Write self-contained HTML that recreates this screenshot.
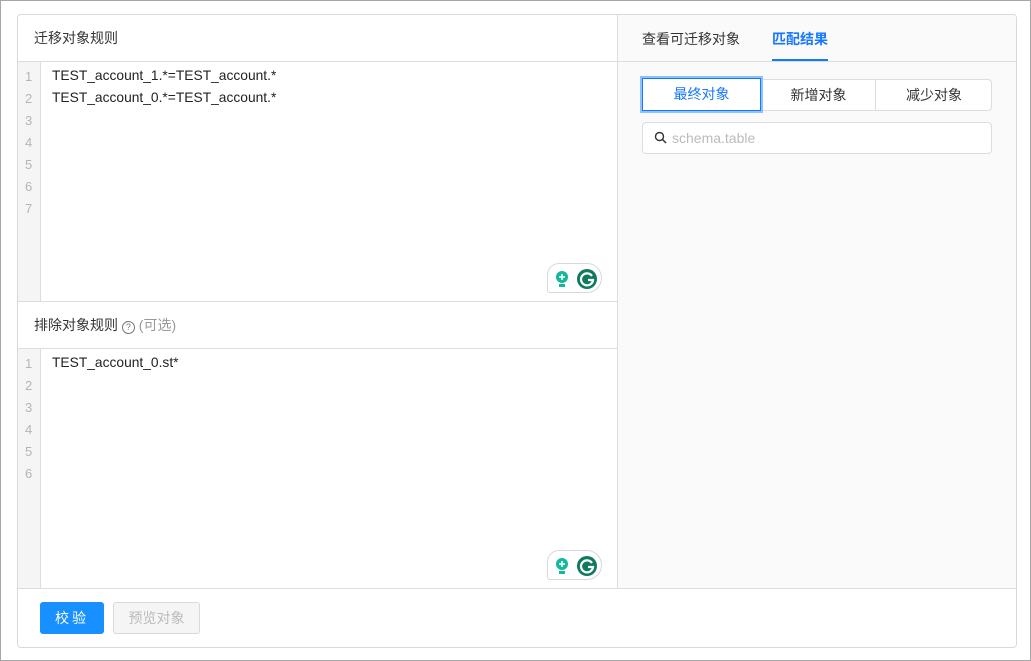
<!DOCTYPE html>
<html><head><meta charset="utf-8"><style>
*{box-sizing:border-box;margin:0;padding:0}
body{width:1031px;height:661px;background:#fff;font-family:"Liberation Sans","Noto Sans CJK SC",sans-serif;font-size:14px;color:#333;position:relative;overflow:hidden}
.outer{position:absolute;left:0;top:0;width:1031px;height:661px;border:1px solid #a6a6a6}
.card{position:absolute;left:17px;top:14px;width:1000px;height:634px;border:1px solid #d9d9d9;border-radius:4px;overflow:hidden}
.abs{position:absolute}
.hdr{position:absolute;left:0;width:599px;height:47px;border-bottom:1px solid #ddd;padding-left:16px;line-height:47px;font-size:14px;color:#333}
.ed{position:absolute;left:0;width:599px;border-bottom:1px solid #ddd}
.gut{position:absolute;left:0;top:0;bottom:0;width:23px;background:#f5f5f5;border-right:1px solid #ddd}
.ln{position:absolute;left:7px;color:#b5b5b5;font-size:13px}
.code{position:absolute;left:34px;font-size:13.8px;color:#222}
.gram{position:absolute;width:55px;height:30px;border:1px solid #d8d8d8;border-radius:12px 15px 15px 3px;background:#fff}
.btn{position:absolute;top:587px;height:32px;border-radius:3px;line-height:32px;text-align:center;font-size:14px}
</style></head><body>
<div class="outer"></div>
<div class="card">
 <div class="abs" style="left:599px;top:0;width:401px;height:574px;background:#fafafa;border-left:1px solid #ddd;border-bottom:1px solid #ddd"></div>
 <div class="hdr" style="top:0">迁移对象规则</div>
 <div class="ed" style="top:47px;height:240px">
  <div class="gut"></div>
  <div class="ln" style="top:7px">1</div><div class="ln" style="top:29px">2</div><div class="ln" style="top:51px">3</div><div class="ln" style="top:73px">4</div><div class="ln" style="top:95px">5</div><div class="ln" style="top:117px">6</div><div class="ln" style="top:139px">7</div>
  <div class="code" style="top:6px">TEST_account_1.*=TEST_account.*</div>
  <div class="code" style="top:28px">TEST_account_0.*=TEST_account.*</div>
 </div>
 <div class="hdr" style="top:287px">排除对象规则 <span style="display:inline-block;width:13px;height:13px;border:1px solid #777;border-radius:50%;font-size:9px;line-height:11px;text-align:center;color:#777;vertical-align:0px">?</span> <span style="color:#999">(可选)</span></div>
 <div class="ed" style="top:334px;height:240px">
  <div class="gut"></div>
  <div class="ln" style="top:7px">1</div><div class="ln" style="top:29px">2</div><div class="ln" style="top:51px">3</div><div class="ln" style="top:73px">4</div><div class="ln" style="top:95px">5</div><div class="ln" style="top:117px">6</div>
  <div class="code" style="top:6px">TEST_account_0.st*</div>
 </div>
 <div class="gram" style="left:529px;top:248px"></div>
 <div class="gram" style="left:529px;top:535px"></div>
 <svg class="abs" style="left:536px;top:254px" width="50" height="20"><circle cx="8" cy="8" r="6" fill="#15b89b"/><rect x="5" y="15" width="6" height="3" fill="#15b89b"/><path d="M8 5v6M5 8h6" stroke="#fff" stroke-width="1.6"/><rect x="23" y="0" width="20" height="20" rx="10" fill="#0f7a5e"/><path d="M38 7a6 6 0 1 0 1 4h-5" stroke="#fff" stroke-width="2.2" fill="none"/></svg>
 <svg class="abs" style="left:536px;top:541px" width="50" height="20"><circle cx="8" cy="8" r="6" fill="#15b89b"/><rect x="5" y="15" width="6" height="3" fill="#15b89b"/><path d="M8 5v6M5 8h6" stroke="#fff" stroke-width="1.6"/><rect x="23" y="0" width="20" height="20" rx="10" fill="#0f7a5e"/><path d="M38 7a6 6 0 1 0 1 4h-5" stroke="#fff" stroke-width="2.2" fill="none"/></svg>
 <div class="abs" style="left:600px;top:46px;width:400px;border-bottom:1px solid #ddd"></div>
 <div class="abs" style="left:624px;top:14px;font-size:14px;color:#333">查看可迁移对象</div>
 <div class="abs" style="left:754px;top:14px;font-size:14px;color:#1677ff;font-weight:bold">匹配结果</div>
 <div class="abs" style="left:754px;top:44px;width:56px;height:2px;background:#1677ff"></div>
 <div class="abs" style="left:624px;top:64px;width:350px;height:32px;border:1px solid #ddd;border-radius:4px;background:#fff"></div>
 <div class="abs" style="left:742px;top:64px;width:1px;height:32px;background:#ddd"></div>
 <div class="abs" style="left:857px;top:64px;width:1px;height:32px;background:#ddd"></div>
 <div class="abs" style="left:624px;top:63px;width:119px;height:33px;border:1px solid #1677ff;box-shadow:0 0 0 2px #8cc2ff;background:#fff;color:#1677ff;text-align:center;line-height:31px">最终对象</div>
 <div class="abs" style="left:743px;top:64px;width:115px;text-align:center;line-height:32px">新增对象</div>
 <div class="abs" style="left:858px;top:64px;width:116px;text-align:center;line-height:32px">减少对象</div>
 <div class="abs" style="left:624px;top:107px;width:350px;height:32px;border:1px solid #ddd;border-radius:4px;background:#fff;line-height:30px;padding-left:29px;color:#bbb">schema.table</div>
 <svg class="abs" style="left:636px;top:116px" width="14" height="14"><circle cx="5.5" cy="5.5" r="4" stroke="#333" stroke-width="1.4" fill="none"/><path d="M8.5 8.5l3.5 3.5" stroke="#333" stroke-width="1.5"/></svg>
 <div class="btn" style="left:22px;width:64px;background:#1890ff;color:#fff;letter-spacing:3px">校验</div>
 <div class="btn" style="left:95px;width:87px;background:#f5f5f5;border:1px solid #d9d9d9;color:#bbb;line-height:30px">预览对象</div>
</div>
</body></html>
